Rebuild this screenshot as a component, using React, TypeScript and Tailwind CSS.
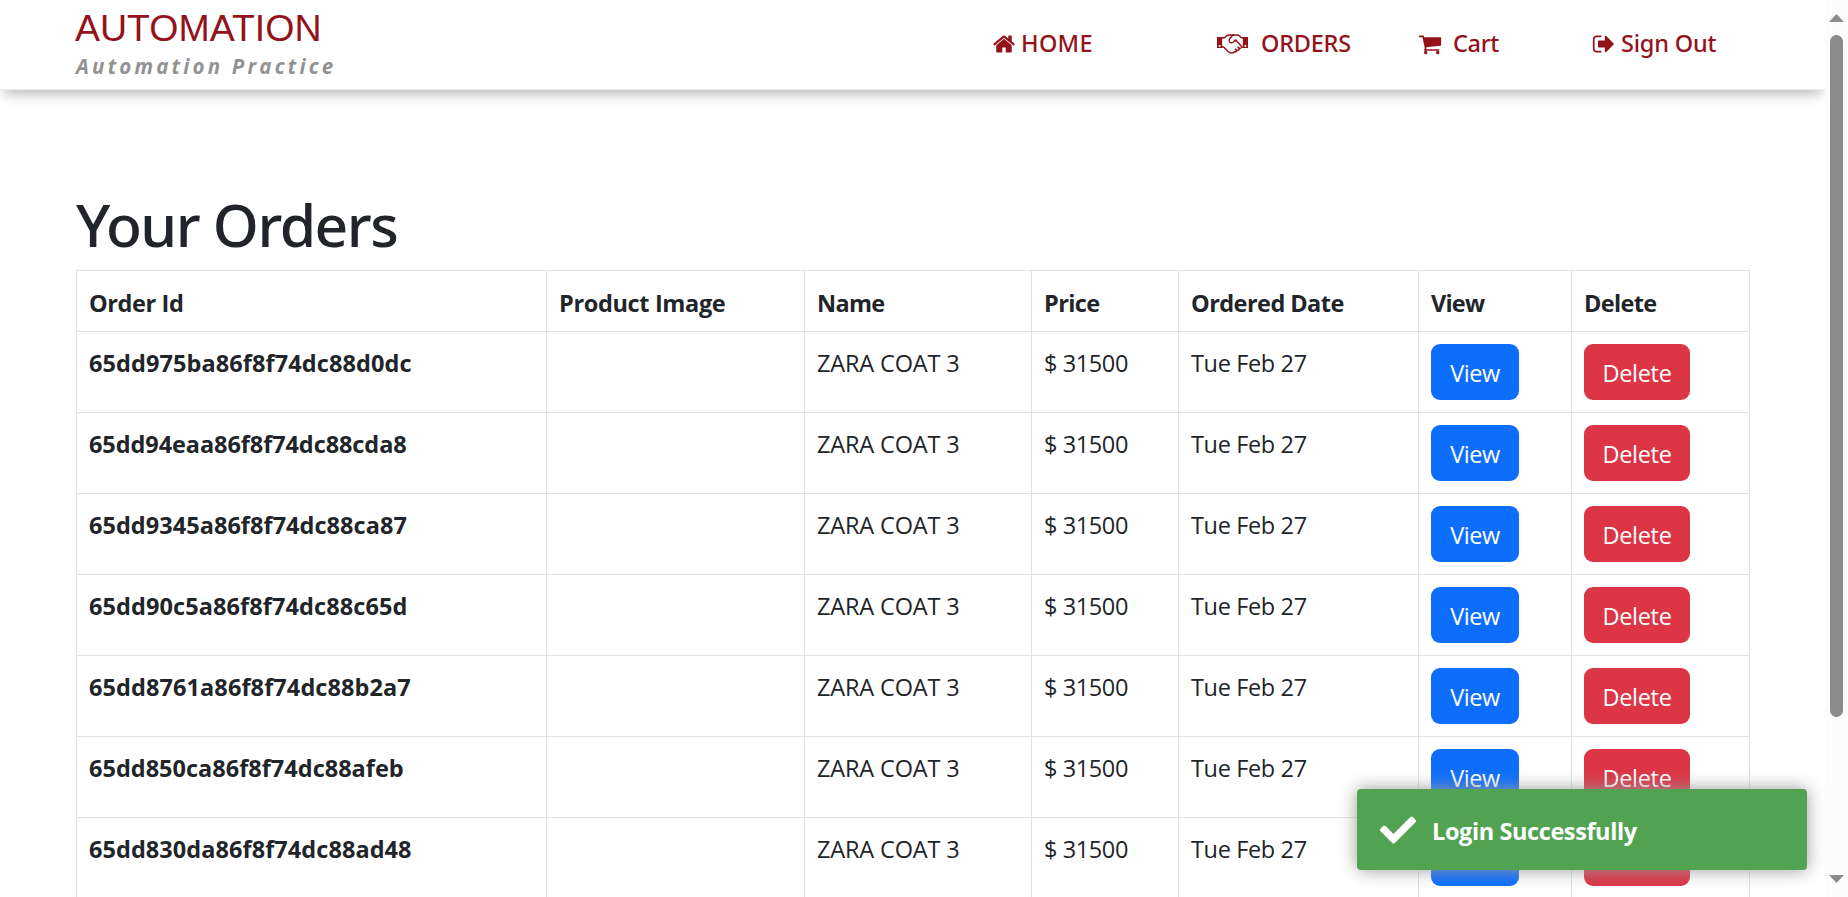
import React from "react";
import { FaCheck } from "react-icons/fa";

const orders = [
  { id: "65dd975ba86f8f74dc88d0dc", cls: "tracking-[0.09px]" },
  { id: "65dd94eaa86f8f74dc88cda8", cls: "tracking-[-0.08px]" },
  { id: "65dd9345a86f8f74dc88ca87", cls: "tracking-[0.04px]" },
  { id: "65dd90c5a86f8f74dc88c65d", cls: "tracking-[0.09px]" },
  { id: "65dd8761a86f8f74dc88b2a7", cls: "tracking-[0.09px]" },
  { id: "65dd850ca86f8f74dc88afeb", cls: "tracking-[0.01px]" },
  { id: "65dd830da86f8f74dc88ad48", cls: "tracking-[0.06px]" },
];

const columns = [
  { label: "Order Id", cls: "w-[470px] tracking-[-0.4px]" },
  { label: "Product Image", cls: "w-[258px] tracking-[-0.35px]" },
  { label: "Name", cls: "w-[227px] tracking-[-0.7px]" },
  { label: "Price", cls: "w-[147px] tracking-[-0.6px]" },
  { label: "Ordered Date", cls: "w-[240px] tracking-[-0.55px]" },
  { label: "View", cls: "w-[153px] tracking-[-0.8px]" },
  { label: "Delete", cls: "w-[178px] tracking-[-0.66px]" },
];

const HOME =
  "M1472 992v480q0 26-19 45t-45 19h-384v-384h-256v384h-384q-26 0-45-19t-19-45v-480q0-1 .5-3t.5-3l575-474 575 474q1 2 1 6zm223-69l-62 74q-8 9-21 11h-3q-13 0-21-7l-692-577-692 577q-12 8-24 7-13-2-21-11l-62-74q-8-10-7-23.5t11-21.5l719-599q32-26 76-26t76 26l244 204v-195q0-14 9-23t23-9h192q14 0 23 9t9 23v408l219 182q10 8 11 21.5t-7 23.5z";
const CART =
  "M704 1536q0 52-38 90t-90 38-90-38-38-90 38-90 90-38 90 38 38 90zm896 0q0 52-38 90t-90 38-90-38-38-90 38-90 90-38 90 38 38 90zm128-1088v512q0 24-16.5 42.5t-40.5 21.5l-1044 122q13 60 13 70 0 16-24 64h920q26 0 45 19t19 45-19 45-45 19h-1024q-26 0-45-19t-19-45q0-11 8-31.5t16-36 21.5-40 15.5-29.5l-177-823h-204q-26 0-45-19t-19-45 19-45 45-19h256q16 0 28.5 6.5t19.5 15.5 13 24.5 8 26 5.5 29.5 4.5 26h1201q26 0 45 19t19 45z";
const SIGN_OUT =
  "M704 1440q0 4 1 20t.5 26.5-3 23.5-10 19.5-20.5 6.5h-320q-119 0-203.5-84.5t-84.5-203.5v-704q0-119 84.5-203.5t203.5-84.5h320q13 0 22.5 9.5t9.5 22.5q0 4 1 20t.5 26.5-3 23.5-10 19.5-20.5 6.5h-320q-66 0-113 47t-47 113v704q0 66 47 113t113 47h312l11.5 1 11.5 3 8 5.5 7 9 2 13.5zm928-544q0 26-19 45l-544 544q-19 19-45 19t-45-19-19-45v-288h-448q-26 0-45-19t-19-45v-384q0-26 19-45t45-19h448v-288q0-26 19-45t45-19 45 19l544 544q19 19 19 45z";

function Glyph({ d }: { d: string }) {
  return (
    <svg viewBox="0 0 1792 1792" className="size-6 shrink-0" fill="currentColor">
      <path d={d} />
    </svg>
  );
}

function Handshake() {
  return (
    <svg viewBox="0 0 31 20" className="h-5 w-[31px] shrink-0" fill="none" stroke="currentColor" strokeWidth="1.5" strokeLinejoin="round">
      <path fill="currentColor" stroke="none" fillRule="evenodd" d="M0 3h5.2v11H0zM2.6 10.9a1 1 0 1 0 0 2 1 1 0 0 0 0-2zM25.8 3H31v11h-5.2zM28.4 10.9a1 1 0 1 0 0 2 1 1 0 0 0 0-2z" />
      <path d="M5 3.8h2.3L10 1.6Q10.8 1 12 1h8.3q1.2 0 2 .8l2 2H26" />
      <path d="M5 13h1.6l4.2 4.3Q12.8 19 14.6 19q1.700 0 2.600-1 1.900.2 2.900-1.500 2 0 2.600-1.900 1.600-.3 1.800-1.600H26" />
      <path d="M17.300 1q-1.300.1-2.200 1l-2.500 2.700Q11.400 6.500 12.700 8q1.800 1.600 3.700 0l2.300-2.100 5.700 6.400M18 14.800l2 1.800M20.600 12.700l2 1.900" />
    </svg>
  );
}

function Header() {
  return (
    <header className="relative flex h-[90px] shrink-0 border-b border-[#ececec] bg-white pl-[75px] shadow-[0_8px_12px_-4px_rgba(0,0,0,0.28)]">
      <div className="w-[917px] pt-[7px]">
        <div className="font-['Liberation_Sans',sans-serif] text-[37.5px] leading-[42px] text-[#94131b]">AUTOMATION</div>
        <p className="pl-px text-[20.5px] leading-[35px] font-bold tracking-[3.2px] text-[#929292] italic">
          Automation Practice
        </p>
      </div>
      <nav className="flex h-[88px] items-center font-['Noto_Sans','Open_Sans',sans-serif] font-medium text-[#94131b]">
        <a className="flex w-[225px] items-center">
          <Glyph d={HOME} />
          <span className="ml-[5px] tracking-[0.3px]">HOME</span>
        </a>
        <a className="flex w-[201px] items-center">
          <Handshake />
          <span className="ml-[13px] tracking-[-0.25px]">ORDERS</span>
        </a>
        <a className="flex w-[174px] items-center">
          <Glyph d={CART} />
          <span className="ml-[11px] tracking-[-0.35px]">Cart</span>
        </a>
        <a className="flex items-center">
          <Glyph d={SIGN_OUT} />
          <span className="ml-[5px] tracking-[-0.2px]">Sign Out</span>
        </a>
      </nav>
    </header>
  );
}

function OrdersTable() {
  return (
    <table className="w-[1674px] table-fixed border-collapse text-left [&_td]:border [&_td]:border-[#dee2e6] [&_td]:px-3 [&_td]:py-0 [&_th]:border [&_th]:border-[#dee2e6] [&_th]:px-3 [&_th]:py-0">
      <thead>
        <tr className="h-[61px] leading-[36px]">
          {columns.map((c) => (
            <th key={c.label} className={c.cls}>
              <div className="pt-[3px]">{c.label}</div>
            </th>
          ))}
        </tr>
      </thead>
      <tbody className="align-top">
        {orders.map((o) => (
          <tr key={o.id} className="h-[81px] leading-[62px]">
            <th className={o.cls}>{o.id}</th>
            <td />
            <td className="tracking-[-0.15px]">ZARA COAT 3</td>
            <td className="tracking-[-0.4px]">$ 31500</td>
            <td className="tracking-[-0.36px]">Tue Feb 27</td>
            <td>
              <button className="mt-3 block h-14 w-[88px] rounded-[9px] bg-[#0d6efd] text-center leading-[59px] tracking-[-0.5px] text-white">
                View
              </button>
            </td>
            <td>
              <button className="mt-3 block h-14 w-[106px] rounded-[9px] bg-[#dc3545] text-center leading-[59px] tracking-[-0.3px] text-white">
                Delete
              </button>
            </td>
          </tr>
        ))}
      </tbody>
    </table>
  );
}

function Scrollbar() {
  return (
    <div className="relative flex h-full w-[23px] shrink-0 flex-col items-center bg-[#fcfcfc] pt-[14px] pb-[14px]">
      <svg width="15" height="8" viewBox="0 0 15 8" fill="#8b8b8b">
        <path d="M7.5 0L15 8H0z" />
      </svg>
      <div className="mt-[13px] h-[682px] w-[13px] rounded-full bg-[#8b8b8b]" />
      <svg className="mt-auto" width="15" height="8" viewBox="0 0 15 8" fill="#8b8b8b">
        <path d="M0 0h15L7.5 8z" />
      </svg>
    </div>
  );
}

export default function App() {
  return (
    <div className="relative flex h-[897px] w-[1848px] overflow-hidden bg-white font-['Open_Sans','Noto_Sans',sans-serif] text-[23.5px] text-[#212529]">
      <div className="flex min-w-0 flex-1 flex-col overflow-hidden">
        <Header />
        <main className="pl-[76px]">
          <h1 className="mt-[98px] mb-[10px] h-[72px] font-['Noto_Sans','Open_Sans',sans-serif] text-[58.8px] leading-[72px] font-medium tracking-[-1.5px]">
            Your Orders
          </h1>
          <OrdersTable />
        </main>
      </div>
      <Scrollbar />
      <div className="absolute right-[41px] bottom-[27px] flex h-[81px] w-[450px] items-center rounded-[4px] bg-[#51a351] pl-[23px] font-bold text-white shadow-[0_0_18px_#999999]">
        <FaCheck className="size-9" />
        <span className="ml-[16px] pt-[5px] tracking-[-0.4px]">Login Successfully</span>
      </div>
    </div>
  );
}
